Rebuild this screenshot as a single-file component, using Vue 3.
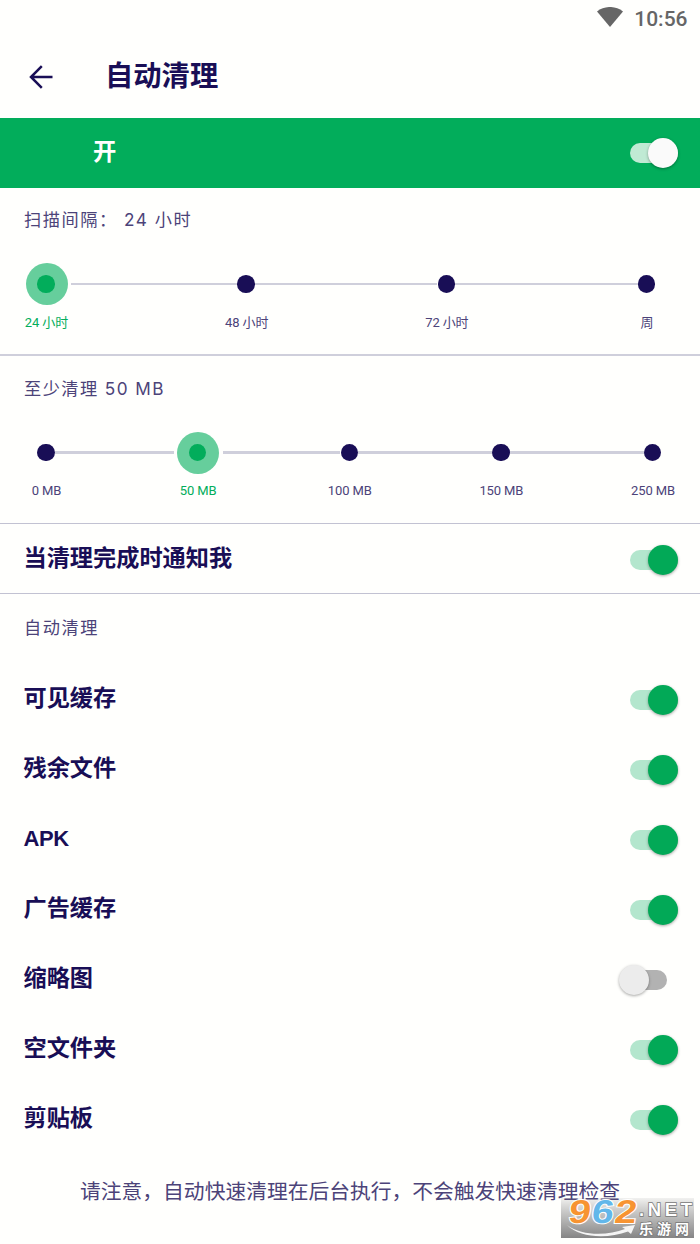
<template>
  <div class="screen">
    <div class="status-bar">
      <svg class="wifi" viewBox="0 0 26 20">
        <path d="M0 4.4C7.5-1.5 18.5-1.5 26 4.4L13 20Z" />
      </svg>
      <span class="clock">10:56</span>
    </div>

    <header class="app-bar">
      <svg class="back" viewBox="0 0 24 24">
        <path d="M23.5 12H2M12.8 1.2L2 12l10.8 10.8" />
      </svg>
      <h1 class="title">自动清理</h1>
    </header>

    <div class="master">
      <span class="master-label">开</span>
      <span class="switch on light"><i class="thumb"></i></span>
    </div>

    <section
      v-for="slider in sliders"
      :key="slider.name"
      class="slider"
      :class="slider.name"
    >
      <h2 class="caption">{{ slider.caption }}</h2>
      <div class="steps">
        <template v-for="(step, i) in slider.steps" :key="step">
          <span
            v-if="i > 0"
            class="track"
            :class="{
              'after-active': i - 1 === slider.active,
              'before-active': i === slider.active,
            }"
          ></span>
          <div class="step" :class="{ active: i === slider.active }">
            <span class="halo"><i class="dot"></i></span>
            <span class="step-label">{{ step }}</span>
          </div>
        </template>
      </div>
    </section>

    <div class="row notify">
      <span class="row-label">当清理完成时通知我</span>
      <span class="switch on"><i class="thumb"></i></span>
    </div>

    <section class="options">
      <h2 class="caption">自动清理</h2>
      <div v-for="option in options" :key="option.text" class="row">
        <span class="row-label" :class="{ latin: option.latin }">{{
          option.text
        }}</span>
        <span class="switch" :class="{ on: option.on }"
          ><i class="thumb"></i
        ></span>
      </div>
    </section>

    <p class="note">请注意，自动快速清理在后台执行，不会触发快速清理检查</p>

    <div class="watermark">
      <svg viewBox="0 0 133 40">
        <defs>
          <linearGradient id="shade" x1="0" y1="0" x2="0" y2="1">
            <stop offset="0" stop-color="#777" stop-opacity="0.1" />
            <stop offset="0.45" stop-color="#888" stop-opacity="0.55" />
            <stop offset="1" stop-color="#858585" />
          </linearGradient>
        </defs>
        <rect width="133" height="40" fill="url(#shade)" />
        <path
          class="swoosh"
          d="M6 27C21 38 46 38 64 31L61 29L74 27L70 36L67 33.500C46 41 19 40 6 27Z"
        />
        <g class="digits" transform="translate(5 0) skewX(-8)">
          <text
            x="5"
            y="25"
            textLength="22"
            lengthAdjust="spacingAndGlyphs"
            class="orange"
          >
            9
          </text>
          <text
            x="28"
            y="25"
            textLength="22"
            lengthAdjust="spacingAndGlyphs"
            class="blue"
          >
            6
          </text>
          <text
            x="51"
            y="25"
            textLength="22"
            lengthAdjust="spacingAndGlyphs"
            class="orange"
          >
            2
          </text>
        </g>
        <text class="net" x="78" y="17.5" textLength="53">.NET</text>
        <text class="site" x="78" y="36" textLength="50">乐游网</text>
      </svg>
    </div>
  </div>
</template>

<script setup>
import { ref } from "vue";

const sliders = ref([
  {
    name: "interval",
    caption: "扫描间隔： 24 小时",
    steps: ["24 小时", "48 小时", "72 小时", "周"],
    active: 0,
  },
  {
    name: "amount",
    caption: "至少清理 50 MB",
    steps: ["0 MB", "50 MB", "100 MB", "150 MB", "250 MB"],
    active: 1,
  },
]);

const options = ref([
  { text: "可见缓存", on: true },
  { text: "残余文件", on: true },
  { text: "APK", on: true, latin: true },
  { text: "广告缓存", on: true },
  { text: "缩略图", on: false },
  { text: "空文件夹", on: true },
  { text: "剪贴板", on: true },
]);
</script>

<style>
body {
  background: #fffffd;
}
</style>

<style scoped>
.screen {
  position: relative;
  width: 700px;
  height: 1244px;
  overflow: hidden;
  background: #fffffd;
  color: #190e56;
  font-family: Roboto, "Noto Sans CJK SC", sans-serif;
}

.status-bar {
  display: flex;
  justify-content: flex-end;
  align-items: center;
  gap: 11px;
  height: 36px;
  padding-right: 12.5px;
}

.wifi {
  width: 26px;
  height: 20px;
  margin-bottom: 2px;
  fill: #666;
}

.clock {
  margin-top: 2px;
  color: #666;
  font-size: 21px;
  font-weight: 500;
  line-height: 36px;
}

.app-bar {
  display: flex;
  align-items: center;
  height: 81.5px;
  padding-left: 29px;
}

.back {
  width: 24px;
  height: 24px;
  fill: none;
  stroke: #190e56;
  stroke-width: 2.5;
}

.title {
  margin: 0 0 0 52px;
  font-size: 28.3px;
  font-weight: 700;
  line-height: 40px;
}

.master {
  display: flex;
  align-items: center;
  justify-content: space-between;
  height: 70px;
  padding: 0 22px 0 93px;
  box-sizing: border-box;
  background: #02ad5b;
}

.master-label {
  margin-bottom: 2px;
  color: #fff;
  font-size: 23.3px;
  font-weight: 700;
  line-height: 34px;
}

.caption {
  margin: 0;
  color: #4c4379;
  font-family: Inter, "Noto Sans CJK SC", sans-serif;
  font-size: 17.2px;
  font-weight: 400;
  line-height: 24px;
  letter-spacing: 1.55px;
  white-space: pre;
}

.slider {
  height: 168.5px;
  padding: 20.5px 31.5px 0 24px;
  box-sizing: border-box;
  border-bottom: 2px solid #cfcfdb;
}

.slider.amount {
  height: 168px;
  padding-top: 20.5px;
  padding-right: 25.5px;
  border-bottom: 1px solid #c2c2d2;
}

.steps {
  display: flex;
  margin-top: 31px;
}

.amount .caption {
  letter-spacing: 1.45px;
}

.step {
  display: flex;
  flex-direction: column;
  align-items: center;
  width: 44px;
}

.halo {
  display: flex;
  align-items: center;
  justify-content: center;
  width: 42px;
  height: 42px;
  border-radius: 50%;
}

.dot {
  width: 17.5px;
  height: 17.5px;
  border-radius: 50%;
  background: #190e56;
}

.active .halo {
  margin-left: 1px;
  background: #66ce9c;
}

.active .dot {
  margin-right: 1px;
  background: #02ad5b;
}

.step-label {
  margin: 8px 0 0 1px;
  color: #4c4379;
  font-size: 13px;
  line-height: 20px;
  letter-spacing: -0.1px;
  white-space: nowrap;
}

.amount .step-label {
  margin-top: 7.5px;
}

.active .step-label {
  color: #02ad5b;
}

.track {
  flex: 1;
  margin: 19.5px -13px 0;
}

.track::before {
  content: "";
  display: block;
  height: 2.5px;
  background: #cfcfdb;
}

/* the line stops short of the halo */
.after-active::before {
  margin-left: 16px;
}

.before-active::before {
  margin-right: 15px;
}

.row {
  display: flex;
  align-items: center;
  justify-content: space-between;
  height: 70px;
  padding: 0 22px 0 23.5px;
  box-sizing: border-box;
}

.notify {
  padding-top: 2px;
  border-bottom: 1px solid #c2c2d2;
}

.row-label {
  margin-bottom: 5px;
  font-size: 23.2px;
  font-weight: 700;
  line-height: 34px;
}

.notify .row-label {
  margin-bottom: 3px;
}

.row-label.latin {
  margin-bottom: 2px;
  font-family: "Liberation Sans", sans-serif;
  font-size: 22px;
  letter-spacing: -0.4px;
}

.switch {
  display: flex;
  align-items: center;
  width: 36px;
  height: 20px;
  margin-right: 11px;
  border-radius: 10px;
  background: #b2b2b2;
}

.thumb {
  width: 30px;
  height: 30px;
  flex: none;
  margin-left: -12px;
  border-radius: 50%;
  background: #ececec;
  box-shadow: 0 1px 3px rgba(0, 0, 0, 0.35);
}

.switch.on {
  width: 48px;
  margin-right: 0;
  justify-content: flex-end;
  background: #b3e6cd;
}

.on .thumb {
  background: #02a957;
}

.switch.light {
  background: #c0ead4;
}

.light .thumb {
  background: #fafafa;
}

.options {
  padding-top: 22px;
}

.options .caption {
  padding: 0 24px;
  margin-bottom: 25px;
}

.note {
  margin: 22px 0 0;
  color: #4c4379;
  font-size: 20.77px;
  line-height: 30px;
  text-align: center;
}

.watermark {
  position: absolute;
  left: 561px;
  top: 1198px;
  width: 133px;
  height: 40px;
}

.watermark svg {
  display: block;
  width: 133px;
  height: 40px;
  overflow: visible;
}

.swoosh {
  fill: #f4f4f4;
}

.digits {
  font-family: "Liberation Sans", sans-serif;
  font-size: 33px;
  font-weight: 700;
  stroke: #fff;
  stroke-width: 2px;
  paint-order: stroke;
}

.orange {
  fill: #f79432;
}

.blue {
  fill: #62b7ea;
}

.net,
.site {
  fill: #fff;
  stroke: #777;
  stroke-width: 1.5px;
  paint-order: stroke;
  font-weight: 700;
}

.net {
  font-family: "Liberation Sans", sans-serif;
  font-size: 18.5px;
}

.site {
  font-family: "Noto Sans CJK SC", sans-serif;
  font-size: 14px;
}
</style>
